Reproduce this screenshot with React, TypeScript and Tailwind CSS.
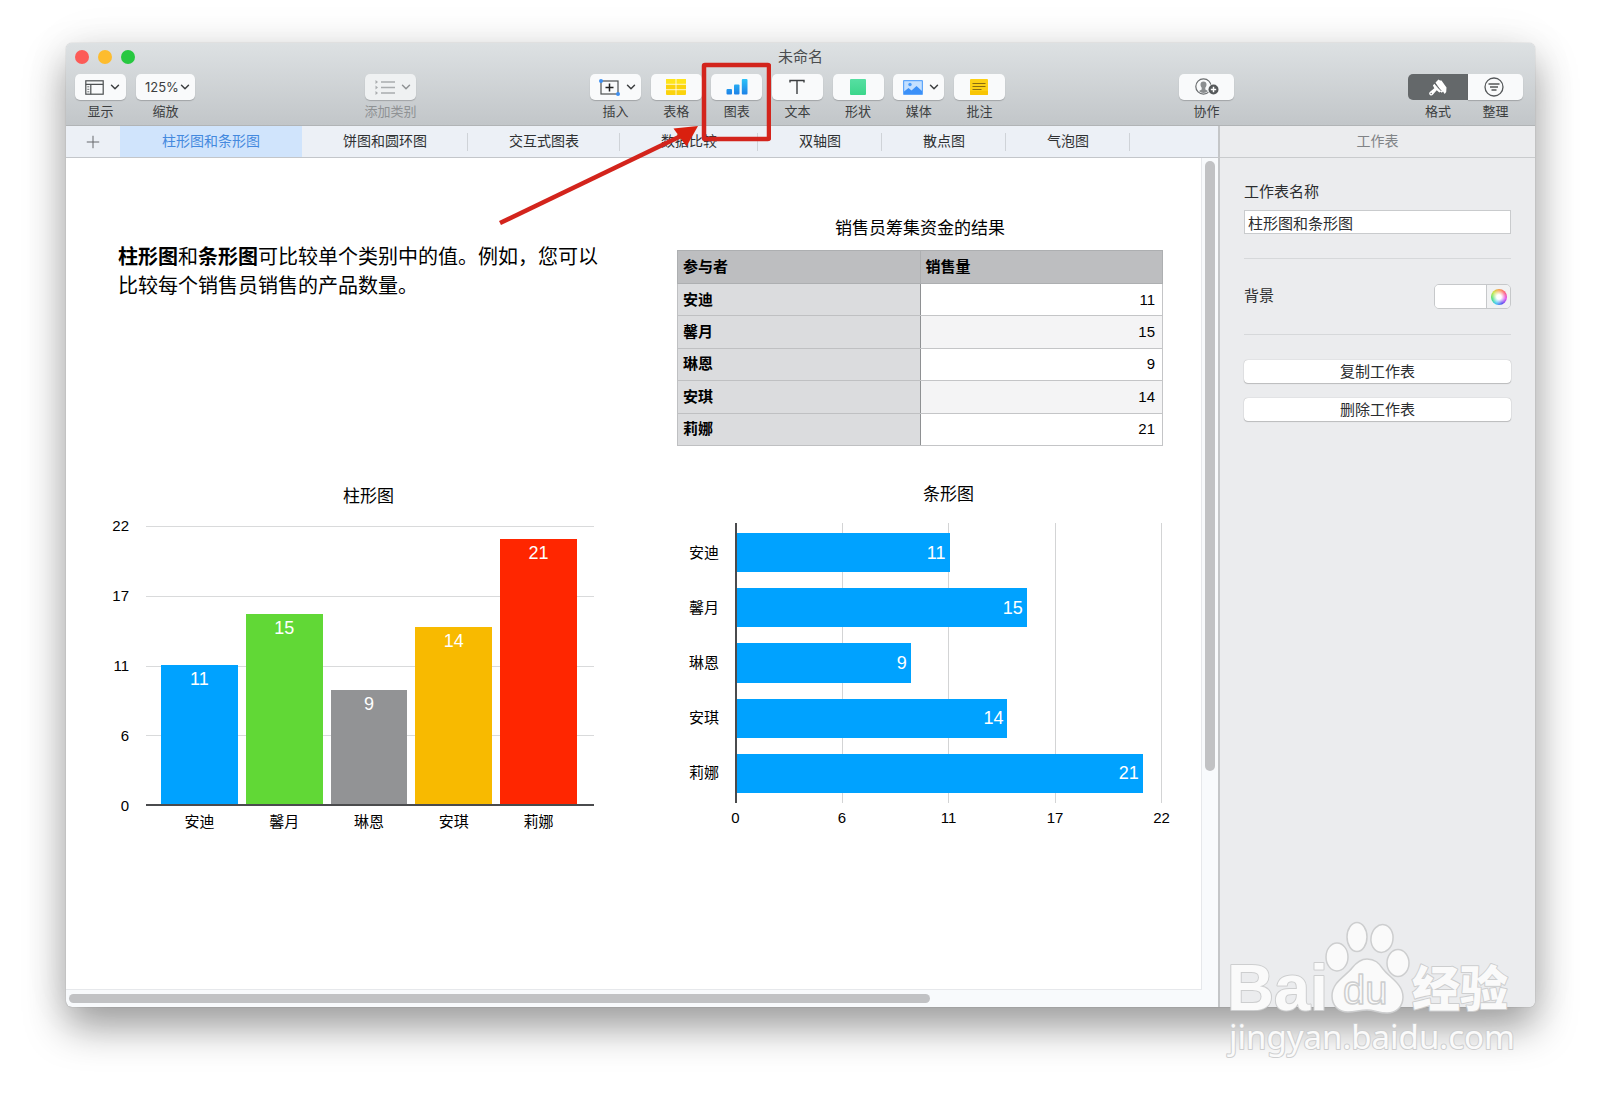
import { useState } from 'react'
import type { ReactNode } from 'react'
import { ChevronDown, Plus } from 'lucide-react'

interface Seller {
  name: string
  sales: number
  color: string
}

const SELLERS: Seller[] = [
  { name: '安迪', sales: 11, color: '#00a2ff' },
  { name: '馨月', sales: 15, color: '#61d836' },
  { name: '琳恩', sales: 9, color: '#929395' },
  { name: '安琪', sales: 14, color: '#f8ba00' },
  { name: '莉娜', sales: 21, color: '#ff2600' }
]

const AXIS_MAX = 22
const AXIS_TICKS = [0, 6, 11, 17, 22]

const SHEETS = ['柱形图和条形图', '饼图和圆环图', '交互式图表', '数据比较', '双轴图', '散点图', '气泡图']

export default function App() {
  const [activeSheet, setActiveSheet] = useState(0)

  return (
    <div className="relative flex min-h-screen bg-white pt-[43px] pr-[65px] pb-[86px] pl-[66px] font-['Liberation_Sans','Noto_Sans_CJK_SC',sans-serif] text-black">
      <main className="flex min-w-0 flex-1 flex-col rounded-[6px] bg-[#f8fafc] shadow-[0_0_1px_rgba(0,0,0,0.4),0_20px_40px_rgba(0,0,0,0.38),0_0_50px_rgba(0,0,0,0.06)]">
        <Toolbar />
        <div className="flex flex-1">
          <div className="flex min-w-0 flex-1 flex-col">
            <SheetTabs active={activeSheet} onSelect={setActiveSheet} />
            <div className="grid flex-1 grid-cols-[1fr_16px] grid-rows-[1fr_17px]">
              <SheetCanvas />
              <div className="px-[3px] pt-[3px]">
                <div className="h-[610px] rounded-full bg-[#c1c2c4]" />
              </div>
              <div className="pt-1 pl-[3px]">
                <div className="h-[9px] w-[76%] rounded-full bg-[#c1c2c4]" />
              </div>
            </div>
          </div>
          <Inspector />
        </div>
      </main>
      <Watermark />
    </div>
  )
}

function Toolbar() {
  return (
    <header className="h-[83px] rounded-t-[6px] border-b border-[#b1b4b6] bg-linear-to-b from-[#dde1e3] to-[#c2c6c9] pt-px">
      <div className="grid h-[30px] grid-cols-[1fr_auto_1fr] items-center pb-1">
        <div className="flex gap-[9px] pl-[9px]">
          <button type="button" aria-label="关闭" className="size-[14px] rounded-full bg-[#fc5b57]" />
          <button type="button" aria-label="最小化" className="size-[14px] rounded-full bg-[#fdbc2e]" />
          <button type="button" aria-label="缩放窗口" className="size-[14px] rounded-full bg-[#27c840]" />
        </div>
        <h1 className="text-[15px] leading-5 text-[#4a4c4e]">未命名</h1>
      </div>

      <div className="flex justify-between pr-3 pl-[9px] text-[#3c3e40]">
        <div className="-mr-1 flex gap-[10px]">
          <ToolButton label="显示" menu>
            <ViewIcon />
          </ToolButton>
          <div className="flex w-[59px] flex-col items-center">
            <div className="relative w-full">
              <select
                id="zoom"
                defaultValue="125%"
                className="block h-[26px] w-full appearance-none rounded-[5px] bg-[#f9fafb] pl-[9px] font-['Inter',sans-serif] text-[13px] leading-[26px] shadow-[0_1px_1px_rgba(0,0,0,0.2)]"
              >
                <option>100%</option>
                <option>125%</option>
                <option>150%</option>
              </select>
              <ChevronDown className="pointer-events-none absolute top-[6px] right-[3px] size-[14px]" strokeWidth={2.500} />
            </div>
            <label htmlFor="zoom" className="mt-[2px] text-[13px] leading-5">
              缩放
            </label>
          </div>
        </div>

        <ToolButton label="添加类别" menu disabled>
          <CategoryIcon />
        </ToolButton>

        <div className="flex w-[415px] justify-between">
          <ToolButton label="插入" menu>
            <InsertIcon />
          </ToolButton>
          <ToolButton label="表格">
            <TableIcon />
          </ToolButton>
          <div className="relative">
            <ToolButton label="图表">
              <ChartIcon />
            </ToolButton>
            <Callout />
          </div>
          <ToolButton label="文本">
            <svg width="16" height="16" viewBox="0 0 16 16" fill="none" stroke="currentColor" strokeWidth="1.4">
              <path d="M1 3.600V1.500h14v2.100M8 1.500V15" />
            </svg>
          </ToolButton>
          <ToolButton label="形状">
            <span className="size-4 rounded-[1px] bg-linear-to-b from-[#56dfa2] to-[#3bd68b]" />
          </ToolButton>
          <ToolButton label="媒体" menu>
            <MediaIcon />
          </ToolButton>
          <ToolButton label="批注">
            <NoteIcon />
          </ToolButton>
        </div>

        <button type="button" className="flex w-[55px] flex-col items-center">
          <span className="flex h-[26px] w-full items-center justify-center rounded-[5px] bg-[#f9fafb] shadow-[0_1px_1px_rgba(0,0,0,0.2)]">
            <CollaborateIcon />
          </span>
          <span className="mt-[2px] text-[13px] leading-5">协作</span>
        </button>

        <div className="flex">
          <button type="button" aria-pressed="true" className="flex w-[60px] flex-col items-center">
            <span className="flex h-[26px] w-full items-center justify-center rounded-l-[5px] bg-[#64686a] text-white">
              <BrushIcon />
            </span>
            <span className="mt-[2px] text-[13px] leading-5">格式</span>
          </button>
          <button type="button" aria-pressed="false" className="flex w-[55px] flex-col items-center">
            <span className="flex h-[26px] w-full items-center justify-center rounded-r-[5px] bg-[#f9fafb] pr-1 shadow-[0_1px_1px_rgba(0,0,0,0.2)]">
              <svg width="20" height="20" viewBox="0 0 20 20" fill="none" stroke="#55585a" strokeWidth="1.300">
                <circle cx="10" cy="10" r="9" />
                <path d="M4.500 7h11M6 10h8M7.500 13h5" strokeWidth="1.600" />
              </svg>
            </span>
            <span className="mt-[2px] text-[13px] leading-5">整理</span>
          </button>
        </div>
      </div>
    </header>
  )
}

interface ToolButtonProps {
  label: string
  menu?: boolean
  disabled?: boolean
  children: ReactNode
}

function ToolButton({ label, menu = false, disabled = false, children }: ToolButtonProps) {
  return (
    <button
      type="button"
      disabled={disabled}
      className="flex w-[51px] flex-col items-center whitespace-nowrap disabled:text-[#8f9294]"
    >
      <span
        className={`flex h-[26px] w-full items-center justify-center rounded-[5px] shadow-[0_1px_1px_rgba(0,0,0,0.2)] ${
          disabled ? 'bg-[#eff1f2]' : 'bg-[#f9fafb]'
        } ${menu ? 'gap-1 pl-[6px]' : ''}`}
      >
        {children}
        {menu && <ChevronDown className="size-[14px]" strokeWidth={2.500} />}
      </span>
      <span className="mt-[2px] text-[13px] leading-5">{label}</span>
    </button>
  )
}

// Red frame round the chart tool, with an arrow coming in from the lower left
function Callout() {
  return (
    <svg
      className="pointer-events-none absolute -top-[14px] -left-[212px] z-10"
      width="272"
      height="170"
      viewBox="0 0 272 170"
      fill="none"
      aria-hidden="true"
    >
      <rect x="205" y="5" width="65" height="74" rx="1" stroke="#d3241c" strokeWidth="4.500" />
      <path d="M1 163 182 76" stroke="#d3241c" strokeWidth="4.500" />
      <path d="M199 66 174.500 68.500 187.500 86.500Z" fill="#d9200f" />
    </svg>
  )
}

function SheetTabs({ active, onSelect }: { active: number; onSelect: (index: number) => void }) {
  return (
    <nav className="flex h-8 border-b border-[#c3c6ca] bg-[#ecf0f6]">
      <button type="button" aria-label="添加工作表" className="flex w-[54px] items-center justify-center text-[#66696c]">
        <Plus className="size-5" strokeWidth={1.200} />
      </button>
      {SHEETS.map((sheet, index) => (
        <button
          key={sheet}
          type="button"
          aria-current={index === active ? 'page' : undefined}
          onClick={() => onSelect(index)}
          className={`relative pb-[2px] text-[14px] leading-7 whitespace-nowrap ${
            index === active
              ? 'bg-[#d0e4fc] px-[42px] text-[#4489de]'
              : 'px-[41px] text-[#2f3133] after:absolute after:top-[7px] after:right-0 after:h-[18px] after:w-px after:bg-[#cfd3d8]'
          }`}
        >
          {sheet}
        </button>
      ))}
    </nav>
  )
}

function SheetCanvas() {
  return (
    <div className="border-r border-b border-[#e6e8eb] bg-white pt-14 pr-[38px] pl-[43px]">
      <div className="grid grid-cols-[568fr_486fr] gap-y-[35px]">
        <p className="w-[499px] pt-[29px] pl-[9px] text-[20px] leading-[29px]">
          <strong>柱形图</strong>和<strong>条形图</strong>可比较单个类别中的值。例如，您可以比较每个销售员销售的产品数量。
        </p>
        <SalesTable />
        <ColumnChart />
        <BarChart />
      </div>
    </div>
  )
}

function SalesTable() {
  return (
    <table className="h-[196px] w-full table-fixed border-collapse text-[15px] leading-5">
      <caption className="pt-px pb-[7px] text-[17px] leading-7">销售员筹集资金的结果</caption>
      <thead>
        <tr className="h-[33px] bg-[#bdbec0] text-left">
          <th scope="col" className="border border-[#adafb1] px-[5px] font-bold">
            参与者
          </th>
          <th scope="col" className="border border-[#adafb1] px-[5px] font-bold">
            销售量
          </th>
        </tr>
      </thead>
      <tbody>
        {SELLERS.map((seller) => (
          <tr key={seller.name} className="even:bg-[#f4f4f5]">
            <th
              scope="row"
              className="border border-r-[#8e9092] border-y-[#bfc0c2] border-l-[#bfc0c2] bg-[#dbdcde] px-[5px] text-left font-bold"
            >
              {seller.name}
            </th>
            <td className="border border-[#c4c5c7] px-[7px] text-right">{seller.sales}</td>
          </tr>
        ))}
      </tbody>
    </table>
  )
}

function ColumnChart() {
  return (
    <figure className="w-[485px]">
      <figcaption className="pt-[2px] pl-[34px] text-center text-[17px] leading-7">柱形图</figcaption>
      <div className="mt-[15px] flex text-[15px] leading-5">
        <div className="flex h-[280px] w-[37px] flex-col-reverse justify-between pr-[17px]">
          {AXIS_TICKS.map((tick) => (
            <span key={tick} className="flex h-0 items-center justify-end">
              {tick}
            </span>
          ))}
        </div>
        <div className="flex-1">
          <div className="relative h-[280px]">
            <div className="absolute inset-0 flex flex-col justify-between">
              {AXIS_TICKS.map((tick) => (
                <div key={tick} className="h-px bg-[#d9dadb]" />
              ))}
            </div>
            <div className="relative flex h-full items-end gap-2 border-b-2 border-[#4a4b4d] pr-[17px] pl-[15px]">
              {SELLERS.map((seller) => (
                <div
                  key={seller.name}
                  className="flex-1 pt-1 text-center text-[18px] text-white"
                  style={{ height: `${(seller.sales / AXIS_MAX) * 100}%`, backgroundColor: seller.color }}
                >
                  {seller.sales}
                </div>
              ))}
            </div>
          </div>
          <div className="flex gap-2 pt-[6px] pr-[17px] pl-[15px]">
            {SELLERS.map((seller) => (
              <span key={seller.name} className="flex-1 text-center">
                {seller.name}
              </span>
            ))}
          </div>
        </div>
      </div>
    </figure>
  )
}

function BarChart() {
  return (
    <figure className="pr-px">
      <figcaption className="pl-[58px] text-center text-[17px] leading-7">条形图</figcaption>
      <div className="mt-[14px] flex text-[15px] leading-5">
        <div className="flex h-[280px] w-[58px] flex-col gap-4 py-[10px] pr-4">
          {SELLERS.map((seller) => (
            <span key={seller.name} className="flex flex-1 items-center justify-end">
              {seller.name}
            </span>
          ))}
        </div>
        <div className="flex-1">
          <div className="relative h-[280px]">
            <div className="absolute inset-0 flex justify-between">
              {AXIS_TICKS.map((tick) => (
                <div key={tick} className="w-px bg-[#d3d4d5]" />
              ))}
            </div>
            <div className="relative flex h-full flex-col gap-4 border-l-2 border-[#4a4b4d] py-[10px]">
              {SELLERS.map((seller) => (
                <div
                  key={seller.name}
                  className="flex flex-1 items-center justify-end bg-[#00a2ff] pr-1 text-[18px] text-white"
                  style={{ width: `${(seller.sales / AXIS_MAX) * 100}%` }}
                >
                  {seller.sales}
                </div>
              ))}
            </div>
          </div>
          <div className="flex justify-between pt-[5px]">
            {AXIS_TICKS.map((tick) => (
              <span key={tick} className="flex w-px justify-center">
                {tick}
              </span>
            ))}
          </div>
        </div>
      </div>
    </figure>
  )
}

function Inspector() {
  return (
    <aside className="w-[317px] rounded-br-[6px] border-l-2 border-[#c4c6c8] bg-[#ebecee] text-[15px] text-[#2b2d2f]">
      <h2 className="h-8 border-b border-[#c9cbcd] text-center text-[14px] leading-[30px] text-[#808386]">工作表</h2>
      <div className="px-6 pt-6">
        <label htmlFor="sheet-name" className="block leading-5">
          工作表名称
        </label>
        <input
          id="sheet-name"
          defaultValue="柱形图和条形图"
          className="mt-2 block h-6 w-full border border-[#c9cbcd] bg-white px-[3px] leading-5 outline-none"
        />
        <div className="mt-6 flex h-[77px] items-center justify-between border-y border-[#d6d8da]">
          <span id="background-label">背景</span>
          <div
            role="group"
            aria-labelledby="background-label"
            className="flex h-[25px] w-[77px] overflow-hidden rounded-[5px] border border-[#c6c8ca]"
          >
            <button type="button" aria-label="填充颜色" className="flex-1 bg-white" />
            <button
              type="button"
              aria-label="色轮"
              className="flex w-6 items-center justify-center border-l border-[#c6c8ca] bg-[#f1f2f3]"
            >
              <span className="size-4 rounded-full bg-[radial-gradient(circle,#fff_20%,transparent_65%),conic-gradient(#f7a04b,#ff5f7e,#e04bf0,#5a50f0,#3fc9f5,#4fe07a,#c8e84a,#f7a04b)]" />
            </button>
          </div>
        </div>
        <div className="mt-[25px] flex flex-col gap-[15px]">
          <PanelButton>复制工作表</PanelButton>
          <PanelButton>删除工作表</PanelButton>
        </div>
      </div>
    </aside>
  )
}

function PanelButton({ children }: { children: ReactNode }) {
  return (
    <button
      type="button"
      className="h-[23px] rounded-[4px] bg-white leading-[22px] shadow-[0_0_1px_rgba(0,0,0,0.35),0_1px_1px_rgba(0,0,0,0.18)]"
    >
      {children}
    </button>
  )
}

function ViewIcon() {
  return (
    <svg width="19" height="15" viewBox="0 0 19 15" fill="none" stroke="#4d5052" strokeWidth="1.200">
      <rect x="0.800" y="0.800" width="17.400" height="13.400" />
      <path d="M0.800 4.300h17.400M5.800 4.300v9.900" />
      <path d="M2.300 6.800h2M2.300 9.300h2M2.300 11.800h2" strokeWidth="0.800" />
    </svg>
  )
}

function CategoryIcon() {
  return (
    <svg width="20" height="15" viewBox="0 0 20 15" fill="none" stroke="#a9acae" strokeWidth="1.300">
      <path d="M6 2h14M6 7.500h14M6 13h14" />
      <path d="M0.500 0v4l2.500-2zM0.500 5.500v4l2.500-2zM0.500 11v4l2.500-2z" fill="#a9acae" stroke="none" />
    </svg>
  )
}

function InsertIcon() {
  return (
    <svg width="21" height="17" viewBox="0 0 21 17" fill="none" stroke="#4d5052" strokeWidth="1.200">
      <rect x="2" y="2" width="17" height="13" />
      <path d="M10.500 4.500v8M6.500 8.500h8" stroke="#222" strokeWidth="1.500" />
      <circle cx="2" cy="2" r="2" fill="#3f8ff0" stroke="none" />
      <circle cx="19" cy="15" r="2" fill="#3f8ff0" stroke="none" />
    </svg>
  )
}

function TableIcon() {
  return (
    <svg width="20" height="16" viewBox="0 0 20 16">
      <rect width="20" height="16" rx="1" fill="#fbd30d" />
      <path d="M1 0h18a1 1 0 0 1 1 1v4H0V1a1 1 0 0 1 1-1z" fill="#fee41b" />
      <path d="M10 0v16M0 5.300h20M0 10.700h20" stroke="#fff" strokeWidth="0.800" />
    </svg>
  )
}

function ChartIcon() {
  return (
    <svg width="22" height="16" viewBox="0 0 22 16">
      <defs>
        <linearGradient id="chart-fill" x1="0" y1="0" x2="0" y2="16" gradientUnits="userSpaceOnUse">
          <stop stopColor="#2cc3f8" />
          <stop offset="1" stopColor="#1d7fe6" />
        </linearGradient>
      </defs>
      <g fill="url(#chart-fill)">
        <rect x="0.500" y="10" width="5.500" height="5.500" rx="1" />
        <rect x="8" y="5.500" width="5.500" height="10" rx="1" />
        <rect x="15.800" y="0" width="5.700" height="15.500" rx="1" />
      </g>
    </svg>
  )
}

function MediaIcon() {
  return (
    <svg width="20" height="15" viewBox="0 0 20 15">
      <rect x="0.600" y="0.600" width="18.800" height="13.800" rx="0.500" fill="#c4e0ff" stroke="#5fa6fa" strokeWidth="1.200" />
      <path d="M1 11.500 5.500 8l3 2.500L13.500 6l5.500 5v3H1z" fill="#3b90f8" />
      <circle cx="7" cy="4.500" r="1.700" fill="#4a9bfa" />
    </svg>
  )
}

function NoteIcon() {
  return (
    <svg width="18" height="16" viewBox="0 0 18 16">
      <rect width="18" height="16" rx="1" fill="#fcd015" />
      <path d="M0 12h18v3a1 1 0 0 1-1 1H1a1 1 0 0 1-1-1z" fill="#f8c505" />
      <path d="M2.500 4.500h13M2.500 7.500h13M2.500 10.500h9" stroke="#8a6c10" strokeWidth="1.100" />
    </svg>
  )
}

function CollaborateIcon() {
  return (
    <svg width="24" height="18" viewBox="0 0 24 18" fill="none">
      <circle cx="8.500" cy="8.500" r="7.700" stroke="#6b6e70" strokeWidth="1.200" />
      <path
        d="M8.500 3.500c-1.900 0-3 1.300-3 3.100 0 1.400.5 2.500 1.200 3.200v1.700L4 13c1.200 1.200 2.800 1.900 4.500 1.900s3.300-.7 4.500-1.900l-2.700-1.500V9.800c.7-.7 1.200-1.800 1.200-3.200 0-1.800-1.100-3.100-3-3.100z"
        fill="#8b8e90"
      />
      <circle cx="18.500" cy="11.500" r="5.800" fill="#f9fafb" />
      <circle cx="18.500" cy="11.500" r="5" fill="#55585a" />
      <path d="M18.500 8.800v5.400M15.800 11.500h5.400" stroke="#fff" strokeWidth="1.500" />
    </svg>
  )
}

function BrushIcon() {
  return (
    <svg width="18" height="17" viewBox="0 0 18 17" fill="currentColor">
      <path d="M6.500 3.500 9.500.500l1.500 1 1.500 0L17.500 8.500l-.3 4.500-1.500 2-1.700-2.500-1.200 1.200-1-.7z" />
      <path d="M5.300 4.800 12 12.500l-1.700 1-2.600-2.300-3.900 4.600a2 2 0 0 1-3-2.800l4.500-3.800-1.400-2.700z" />
      <path d="M6 4.200 12.300 12" stroke="#64686a" strokeWidth="0.900" />
      <circle cx="2.200" cy="14.500" r="0.700" fill="#64686a" />
    </svg>
  )
}

function Watermark() {
  return (
    <svg
      className="pointer-events-none absolute right-20 bottom-7"
      width="300"
      height="150"
      viewBox="0 0 300 150"
      fill="#fafafa"
      stroke="#cdcecf"
      strokeWidth="2"
      strokeLinejoin="round"
      aria-hidden="true"
    >
      <g className="font-['Liberation_Sans',sans-serif] font-bold" style={{ paintOrder: 'stroke' }}>
        <text x="7" y="95" fontSize="65">
          Bai
        </text>
        <text x="192" y="91" fontSize="48" className="font-['Noto_Sans_CJK_SC',sans-serif] font-black">
          经验
        </text>
      </g>
      <g strokeWidth="1.500">
        <ellipse cx="117" cy="42" rx="11" ry="14" />
        <ellipse cx="137" cy="22" rx="10" ry="14.500" />
        <ellipse cx="162" cy="23.500" rx="11" ry="14" transform="rotate(8 162 23.500)" />
        <ellipse cx="178" cy="48" rx="11" ry="13.500" />
        <path d="M147 44c-7 0-11 4-15 9-6 8-20 14-20 28 0 10 7 16 16 16 7 0 12-2 19-2s12 3 20 3c9 0 16-6 16-16 0-13-13-19-20-28-4-6-8-10-16-10z" />
      </g>
      <text
        x="123"
        y="89"
        fontSize="40"
        strokeWidth="1.500"
        className="font-['Liberation_Sans',sans-serif]"
      >
        du
      </text>
      <text
        x="9"
        y="134"
        fontSize="33"
        style={{ paintOrder: 'stroke' }}
        className="font-['Noto_Sans','Open_Sans',sans-serif]"
      >
        jingyan.baidu.com
      </text>
    </svg>
  )
}
